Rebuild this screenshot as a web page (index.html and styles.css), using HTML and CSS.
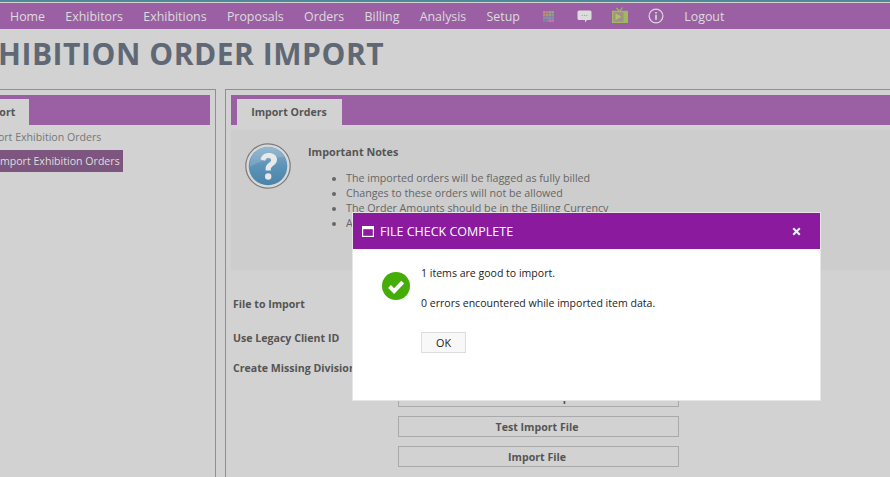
FILE: index.html
```html
<!DOCTYPE html>
<html lang="en">
<head>
<meta charset="utf-8">
<title>Exhibition Order Import</title>
<link rel="stylesheet" href="styles.css">
</head>
<body>
<div class="page">
  <nav class="nav">
    <a>Home</a><a>Exhibitors</a><a>Exhibitions</a><a>Proposals</a><a>Orders</a><a>Billing</a><a>Analysis</a><a>Setup</a>
    <svg class="ico-grid" width="11" height="11" viewBox="0 0 11 11">
      <rect x="0" y="0" width="2.5" height="2.5" fill="#c9828f"/><rect x="2.8" y="0" width="2.5" height="2.5" fill="#b58a7c"/><rect x="5.6" y="0" width="2.5" height="2.5" fill="#9aa37a"/><rect x="8.4" y="0" width="2.5" height="2.5" fill="#8fa88a"/>
      <rect x="0" y="2.8" width="2.5" height="2.5" fill="#c08a70"/><rect x="2.8" y="2.8" width="2.5" height="2.5" fill="#a89a70"/><rect x="5.6" y="2.8" width="2.5" height="2.5" fill="#8aa878"/><rect x="8.4" y="2.8" width="2.5" height="2.5" fill="#7da48f"/>
      <rect x="0" y="5.6" width="2.5" height="2.5" fill="#8a8fa0"/><rect x="2.8" y="5.6" width="2.5" height="2.5" fill="#8094a8"/><rect x="5.6" y="5.6" width="2.5" height="2.5" fill="#7a9ab0"/><rect x="8.4" y="5.6" width="2.5" height="2.5" fill="#7f8fc0"/>
      <rect x="0" y="8.4" width="2.5" height="2.5" fill="#7f88a0"/><rect x="2.8" y="8.4" width="2.5" height="2.5" fill="#8b7fa8"/><rect x="5.6" y="8.4" width="2.5" height="2.5" fill="#c080a8"/><rect x="8.4" y="8.4" width="2.5" height="2.5" fill="#c878a0"/>
    </svg>
    <svg class="ico-chat" width="15" height="13" viewBox="0 0 15 13">
      <path d="M2 0.5h11a1.5 1.5 0 0 1 1.5 1.5v6.5a1.5 1.5 0 0 1-1.5 1.5h-3l-2 2.5v-2.5h-6a1.5 1.5 0 0 1-1.5-1.5v-6.5a1.5 1.5 0 0 1 1.5-1.5z" fill="#dcdcdc"/>
      <circle cx="5.2" cy="5.3" r=".6" fill="#a78aa9"/><circle cx="7.5" cy="5.3" r=".6" fill="#a78aa9"/><circle cx="9.8" cy="5.3" r=".6" fill="#a78aa9"/>
    </svg>
    <svg class="ico-tv" width="16" height="16" viewBox="0 0 16 16">
      <path d="M4.5 1l3 3.5 3-4" fill="none" stroke="#9dba5e" stroke-width="1.2"/>
      <rect x=".7" y="4.5" width="14.6" height="10.8" fill="#a78d88" stroke="#9dba5e" stroke-width="1.4"/>
      <rect x="11.5" y="5" width="3.5" height="10" fill="#9dba5e"/>
      <path d="M3.500 6.300l6 3.500-6 3.500z" fill="#a9c566"/>
    </svg>
    <svg class="ico-info" width="16" height="16" viewBox="0 0 16 16">
      <circle cx="8" cy="8" r="6.9" fill="none" stroke="#dcdcdc" stroke-width="1.2"/>
      <rect x="7.2" y="6.8" width="1.6" height="5" fill="#dcdcdc"/><rect x="7.2" y="4" width="1.6" height="1.6" fill="#dcdcdc"/>
    </svg>
    <a class="logout">Logout</a>
  </nav>
  <h1 class="title">EXHIBITION ORDER IMPORT</h1>
  <div class="columns">
    <section class="panel panel-left">
      <div class="tabbar"><span class="tab tab-left">Import</span></div>
      <ul class="menu">
        <li class="menu-item">Export Exhibition Orders</li>
        <li class="menu-item menu-active">Import Exhibition Orders</li>
      </ul>
    </section>
    <section class="panel panel-right">
      <div class="tabbar"><span class="tab">Import Orders</span></div>
      <div class="notes">
        <svg class="ico-help" width="46" height="46" viewBox="0 0 46 46">
          <defs>
            <linearGradient id="helpfill" x1="0" y1="0" x2="0" y2="1"><stop offset="0" stop-color="#84aec8"/><stop offset=".5" stop-color="#5d93b8"/><stop offset="1" stop-color="#4a83a8"/></linearGradient>
          </defs>
          <circle cx="23" cy="23" r="22.2" fill="#d9d9d9" stroke="#7b7b7b" stroke-width="1.2"/>
          <circle cx="23" cy="23" r="19.3" fill="url(#helpfill)"/>
          <path d="M5 24a18 18 0 0 1 34-10c-10 0-24 4-34 10z" fill="#fff" opacity=".14"/>
          <path d="M15.5 16.5c1-4.5 4.5-6.5 8.2-6.5 4.8 0 8.3 2.700 8.300 6.800 0 3-1.800 4.500-3.700 5.900-1.700 1.200-2.500 2-2.500 3.800v1h-5.200v-1.700c0-2.900 1.500-4.400 3.200-5.700 1.300-1 2.300-1.700 2.300-3 0-1.500-1.100-2.400-2.700-2.400-1.700 0-2.800 1-3.300 3z" fill="#e9e9e9"/>
          <circle cx="23.200" cy="33.500" r="3.200" fill="#e9e9e9"/>
        </svg>
        <div class="notes-body">
          <h2 class="notes-title">Important Notes</h2>
          <ul class="notes-list">
            <li>The imported orders will be flagged as fully billed</li>
            <li>Changes to these orders will not be allowed</li>
            <li>The Order Amounts should be in the Billing Currency</li>
            <li>All rows are required</li>
          </ul>
        </div>
      </div>
      <div class="form">
        <div class="form-labels">
          <div class="label label-file">File to Import</div>
          <div class="label label-legacy">Use Legacy Client ID</div>
          <div class="label label-div">Create Missing Divisions</div>
        </div>
        <div class="form-actions">
          <button class="btn">Download Template</button>
          <button class="btn">Test Import File</button>
          <button class="btn">Import File</button>
        </div>
      </div>
    </section>
  </div>
</div>
<div class="modal">
  <header class="modal-head">
    <svg class="ico-win" width="12" height="11" viewBox="0 0 12 11"><rect x=".6" y=".6" width="10.800" height="9.800" fill="none" stroke="#fff" stroke-width="1.200"/><rect x=".6" y=".6" width="10.800" height="2.600" fill="#fff"/></svg>
    <span class="modal-title">FILE CHECK COMPLETE</span>
    <svg class="ico-x" width="9" height="9" viewBox="0 0 9 9"><path d="M1.200 1.200l6.600 6.600M7.800 1.200l-6.600 6.600" stroke="#e4f0fa" stroke-width="2.100"/></svg>
  </header>
  <div class="modal-body">
    <svg class="ico-ok" width="28" height="28" viewBox="0 0 28 28">
      <circle cx="14" cy="14" r="14" fill="#44ad07"/>
      <path d="M7.500 14.500l4.600 4.600 8.600-9" fill="none" stroke="#fff" stroke-width="4" />
    </svg>
    <div class="modal-text">
      <p class="msg">1 items are good to import.</p>
      <p class="msg">0 errors encountered while imported item data.</p>
      <button class="ok">OK</button>
    </div>
  </div>
</div>
</body>
</html>
```

FILE: styles.css
```css
html, body { margin: 0; padding: 0; height: 100%; }
body {
  background: #d2d2d2;
  overflow: hidden;
  font-family: "Open Sans", "Liberation Sans", sans-serif;
  font-size: 10.6px;
  color: #555;
}
.page { margin-left: -40px; width: 1000px; height: 477px; border-top: 2px solid #4f8a9a; overflow: hidden; }
.nav {
  margin-top: 1px;
  height: 26px;
  background: #9b60a4;
  padding-left: 50px;
  display: flex;
  align-items: center;
  color: #dcdcdc;
  font-size: 12.4px;
}
.nav a { margin-right: 20.3px; }
.ico-grid { margin: 0 0 0 3px; }
.ico-chat { margin-left: 23px; }
.ico-tv { margin-left: 20px; margin-top: -3px; }
.ico-info { margin-left: 20px; }
.nav .logout { margin-left: 20px; }
.title {
  margin: 0;
  height: 60px;
  font-size: 30px;
  line-height: 50px;
  font-weight: 700;
  color: #5f6874;
  letter-spacing: .55px;
}
.columns { display: flex; gap: 9px; height: 400px; }
.panel { border: 1px solid #8f8f8f; padding: 5px; box-sizing: border-box; height: 400px; }
.panel-left { width: 216px; margin-left: 40px; padding-left: 0; border-left: 0; }
.panel-right { flex: 1; }
.tabbar { height: 30px; background: #9b60a4; padding-left: 6px; display: flex; align-items: flex-end; }
.tab {
  width: 105px; height: 26px; box-sizing: border-box;
  background: #d2d2d2; color: #555; font-weight: 700;
  text-align: center; line-height: 26px; padding-right: 1px;
}
.tab-left { width: 63px; margin-left: -40px; }
.menu { list-style: none; margin: 0; padding: 0; }
.menu-item { height: 22px; line-height: 22px; color: #777; white-space: nowrap; }
.menu-item:first-child { margin-top: 1px; margin-left: -20px; }
.menu-active { background: #7d567f; color: #ddd; margin-top: 2px; width: 123px; text-indent: -3px; overflow: hidden; }
.notes { margin-top: 5px; height: 140px; background: #cdcdcd; display: flex; }
.ico-help { margin: 13px 0 0 14px; }
.notes-body { margin-left: 17px; }
.notes-title { margin: 14px 0 0; font-size: 10.8px; line-height: 16px; font-weight: 700; color: #555; }
.notes-list { margin: 11px 0 0; padding-left: 38px; line-height: 15px; color: #666; font-size: 10.7px; }
.form { position: relative; display: flex; height: 200px; }
.form-labels { width: 167px; margin-left: 2px; margin-right: -2px; font-weight: 700; color: #555; white-space: nowrap; }
.label { line-height: 16px; }
.label-file { margin-top: 26px; }
.label-legacy { margin-top: 18px; }
.label-div { margin-top: 14px; }
.form-actions { display: flex; flex-direction: column; gap: 9px; margin-top: 116px; }
.btn {
  width: 281px; height: 21px; box-sizing: border-box;
  background: #d2d2d2; border: 1px solid #a9a9a9;
  font: 700 10.6px "Open Sans", sans-serif; color: #555; padding: 0 3px 0 0;
}
.modal {
  position: absolute; left: 353px; top: 213px; width: 467px; height: 187px;
  background: #fff; box-shadow: 0 0 0 1px #e6e6e6; color: #222;
}
.modal-head { height: 36px; background: #8b1a9f; display: flex; align-items: center; padding-left: 9px; color: #fff; }
.modal-title { margin-left: 6px; font-size: 12.5px; flex: 1; }
.ico-x { margin-right: 19px; }
.modal-body { display: flex; }
.ico-ok { margin: 23px 0 0 29px; }
.modal-text { margin-left: 11px; padding-top: 16px; }
.msg { margin: 0 0 14px; line-height: 16px; font-size: 10.55px; }
.ok {
  margin-top: 7px; width: 45px; height: 21px; box-sizing: border-box;
  background: #f8f8f8; border: 1px solid #ddd;
  font: 10.8px "Open Sans", sans-serif; color: #222; padding: 0;
}
```
